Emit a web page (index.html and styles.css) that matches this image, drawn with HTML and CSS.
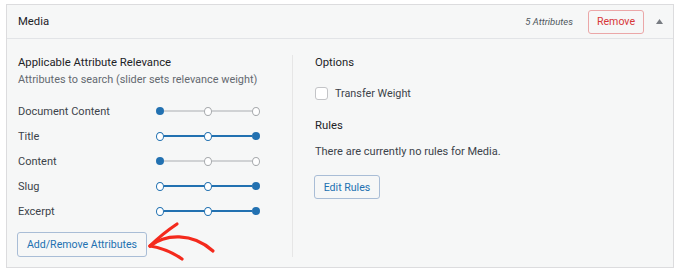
FILE: index.html
```html
<!DOCTYPE html>
<html lang="en">
<head>
<meta charset="utf-8">
<title>Media</title>
<link rel="stylesheet" href="styles.css">
</head>
<body>
<div class="panel">
  <div class="panel-head">
    <span class="panel-title">Media</span>
    <div class="head-right">
      <span class="count">5 Attributes</span>
      <button class="btn btn-remove">Remove</button>
      <span class="toggle"><svg width="7" height="5" viewBox="0 0 7 5"><path d="M0 5 L3.5 0 L7 5 Z" fill="#787c82"/></svg></span>
    </div>
  </div>
  <div class="panel-body">
    <div class="col-left">
      <h3 class="heading">Applicable Attribute Relevance</h3>
      <p class="desc">Attributes to search (slider sets relevance weight)</p>
      <ul class="attrs">
        <li class="attr">
          <span class="attr-label">Document Content</span>
          <span class="slider">
            <span class="dot on"></span><span class="seg"></span><span class="dot off"></span><span class="seg"></span><span class="dot off"></span>
          </span>
        </li>
        <li class="attr">
          <span class="attr-label">Title</span>
          <span class="slider">
            <span class="dot past"></span><span class="seg active"></span><span class="dot past"></span><span class="seg active"></span><span class="dot on"></span>
          </span>
        </li>
        <li class="attr">
          <span class="attr-label">Content</span>
          <span class="slider">
            <span class="dot on"></span><span class="seg"></span><span class="dot off"></span><span class="seg"></span><span class="dot off"></span>
          </span>
        </li>
        <li class="attr">
          <span class="attr-label">Slug</span>
          <span class="slider">
            <span class="dot past"></span><span class="seg active"></span><span class="dot past"></span><span class="seg active"></span><span class="dot on"></span>
          </span>
        </li>
        <li class="attr">
          <span class="attr-label">Excerpt</span>
          <span class="slider">
            <span class="dot past"></span><span class="seg active"></span><span class="dot past"></span><span class="seg active"></span><span class="dot on"></span>
          </span>
        </li>
      </ul>
      <div class="add-wrap">
        <button class="btn btn-add">Add/Remove Attributes</button>
        <svg class="arrow" width="75" height="45" viewBox="0 0 75 45" fill="none" stroke="#f42a1d" stroke-linecap="round" stroke-linejoin="round">
          <path d="M5 27 Q17 15 32 5" stroke-width="3.2"/>
          <path d="M5 27 C20 15 47 13 68 32" stroke-width="3.2"/>
          <path d="M5 27 Q23 30 37 40" stroke-width="3.2"/>
        </svg>
      </div>
    </div>
    <div class="col-right">
      <h3 class="heading">Options</h3>
      <label class="check-row"><span class="checkbox"></span><span>Transfer Weight</span></label>
      <h3 class="heading rules-heading">Rules</h3>
      <p class="rules-text">There are currently no rules for Media.</p>
      <button class="btn btn-edit">Edit Rules</button>
    </div>
  </div>
</div>
</body>
</html>
```

FILE: styles.css
```css
* { box-sizing: border-box; }

body {
  margin: 0;
  padding: 4px 6px;
  background: #ffffff;
  font-family: Roboto, "Liberation Sans", sans-serif;
  color: #1d2327;
  font-size: 11px;
}

.panel {
  border: 1px solid #dcdcde;
  background: #f6f7f7;
}

.panel-head {
  height: 34px;
  border-bottom: 1px solid #e2e4e7;
  display: flex;
  align-items: center;
  justify-content: space-between;
  padding: 0 10px 0 11px;
}

.panel-title {
  font-size: 11.3px;
}

.head-right {
  display: flex;
  align-items: center;
}

.count {
  font-size: 9.5px;
  font-style: italic;
  color: #50575e;
  margin-right: 15px;
}

.btn {
  font-family: inherit;
  font-size: 10.6px;
  height: 25px;
  padding: 0;
  border: 1px solid #a9bdd6;
  border-radius: 3px;
  background: #f6f7f7;
  color: #2271b1;
  cursor: pointer;
}

.btn-remove {
  height: 24px;
  width: 56px;
  border-color: #eba7a8;
  color: #d63638;
}

.btn-add {
  width: 130px;
  margin-left: -1px;
}

.btn-edit {
  width: 66px;
  margin-left: -1px;
}

.toggle {
  display: flex;
  margin-left: 12px;
  width: 7px;
}

.panel-body {
  display: flex;
  padding: 16px 11px 10px;
}

.col-left {
  width: 274px;
}

.heading {
  margin: 0;
  font-size: 11.3px;
  font-weight: 400;
  line-height: 16px;
}

.desc {
  margin: 1px 0 0;
  font-size: 10.9px;
  line-height: 16px;
  color: #646970;
}

.attrs {
  list-style: none;
  margin: 10.5px 0 0;
  padding: 0;
}

.attr {
  display: flex;
  align-items: center;
  height: 25px;
}

.attr-label {
  width: 138px;
  font-size: 11px;
  color: #3c434a;
}

.slider {
  display: flex;
  align-items: center;
}

.dot {
  width: 8px;
  height: 8px;
  display: flex;
  align-items: center;
  justify-content: center;
}

.dot::before {
  content: "";
  display: block;
  border-radius: 50%;
}

.dot.on::before {
  width: 8px;
  height: 8px;
  background: #2271b1;
}

.dot.past::before,
.dot.off::before {
  width: 7px;
  height: 7px;
  background: #ffffff;
  border: 1.5px solid #2271b1;
}

.dot.off::before {
  border-color: #a7aaad;
}

.seg {
  width: 40px;
  height: 1.5px;
  background: #d0d2d4;
}

.seg.active {
  height: 2px;
  background: #2271b1;
}

.add-wrap {
  position: relative;
  margin-top: 8.5px;
}

.arrow {
  position: absolute;
  left: 127px;
  top: -13px;
}

.col-right {
  flex: 1;
  border-left: 1px solid #e6e6e6;
  padding-left: 22px;
}

.check-row {
  display: flex;
  align-items: center;
  margin-top: 16px;
  font-size: 10.8px;
  color: #3c434a;
}

.checkbox {
  width: 13px;
  height: 13px;
  border: 1px solid #c3c4c7;
  border-radius: 3px;
  background: #ffffff;
  margin-right: 7px;
}

.rules-heading {
  margin-top: 18px;
}

.rules-text {
  margin: 10px 0 0;
  font-size: 11px;
  line-height: 16px;
  color: #3c434a;
}

.btn-edit {
  margin-top: 15px;
  height: 24px;
}
```
